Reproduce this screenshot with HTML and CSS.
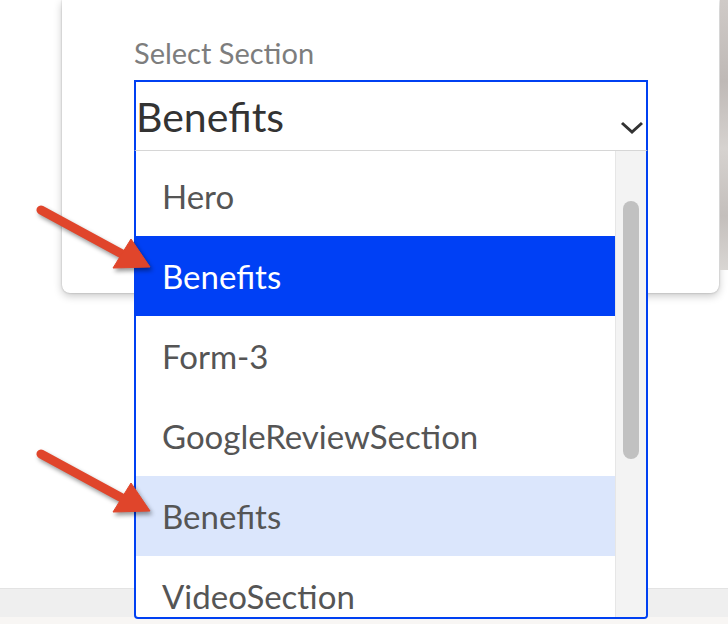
FILE: index.html
```html
<!DOCTYPE html>
<html lang="en">

<head>
    <meta charset="UTF-8">
    <meta name="viewport" content="width=device-width, initial-scale=1.0">
    <title>Select Section</title>
    <link rel="stylesheet" href="styles.css">
</head>

<body>
    <div class="stage">
        <div class="top-row">
            <div class="card">
                <label class="field-label" for="section">Select Section</label>
                <div class="select-wrap">
                    <div class="select-box" id="section">
                        <span class="select-value">Benefits</span>
                        <svg class="chevron" width="24" height="14" viewBox="0 0 24 14">
                            <polyline points="2,2 12,11 22,2" fill="none" stroke="#333" stroke-width="3" />
                        </svg>
                    </div>
                    <div class="dropdown">
                        <ul class="options">
                            <li>Hero</li>
                            <li class="active">Benefits</li>
                            <li>Form-3</li>
                            <li>GoogleReviewSection</li>
                            <li class="hover">Benefits</li>
                            <li>VideoSection</li>
                        </ul>
                        <div class="scrollbar">
                            <div class="thumb"></div>
                        </div>
                    </div>
                </div>
            </div>
            <div class="photo"></div>
        </div>

        <div class="footer-band"></div>
        <div class="footer-edge"></div>

        <svg class="arrows" width="728" height="624" viewBox="0 0 728 624">
            <g class="arrow">
                <line x1="41" y1="210" x2="122" y2="254" />
                <polygon points="150,267 131,239 113,268" />
            </g>
            <g class="arrow">
                <line x1="41" y1="454" x2="122" y2="498" />
                <polygon points="150,511 131,483 113,512" />
            </g>
        </svg>
    </div>
</body>

</html>
```

FILE: styles.css
```css
body {
    margin: 0;
    padding: 0;
    background-color: #fff;
    font-family: Lato, "Open Sans", sans-serif;
}

.stage {
    position: relative;
    width: 728px;
    height: 624px;
    overflow: hidden;
}

.top-row {
    display: flex;
    align-items: flex-start;
    height: 588px;
    padding-left: 62px;
    box-sizing: border-box;
}

.card {
    width: 657px;
    height: 293px;
    padding: 35px 0 0 72px;
    box-sizing: border-box;
    background-color: #fff;
    border-radius: 0 0 8px 8px;
    box-shadow: 0 3px 9px rgba(0, 0, 0, 0.22), 0 0 2px rgba(0, 0, 0, 0.25);
}

.photo {
    width: 8px;
    height: 270px;
    margin-left: 1px;
    background: linear-gradient(180deg, #cfcac7, #bfb9b6 30%, #d6d2cf 55%, #c4bfbc 80%, #d9d6d3);
}

.field-label {
    display: block;
    font-size: 29px;
    color: #7d7d7d;
    line-height: 36px;
    margin-bottom: 9px;
}

.select-wrap {
    position: relative;
    width: 514px;
}

.select-box {
    display: flex;
    justify-content: space-between;
    height: 71px;
    border: 2px solid #0040f2;
    border-bottom: 1px solid #d6d6d6;
    box-sizing: border-box;
    padding: 0 2px 0 0;
}

.select-value {
    font-size: 41px;
    color: #333;
    line-height: 74px;
    margin-top: -2px;
}

.chevron {
    align-self: flex-end;
    margin-bottom: 15px;
}

.dropdown {
    position: absolute;
    top: 100%;
    left: 0;
    width: 514px;
    height: 468px;
    display: flex;
    border: 2px solid #0040f2;
    border-top: none;
    border-radius: 0 0 4px 4px;
    box-sizing: border-box;
    background-color: #fff;
    overflow: hidden;
}

.options {
    flex: 1;
    list-style: none;
    margin: 0;
    padding: 5px 0 0;
}

.options li {
    height: 80px;
    line-height: 80px;
    padding-left: 26px;
    font-size: 33px;
    color: #555;
}

.options li.active {
    background-color: #0040f5;
    color: #fff;
}

.options li.hover {
    background-color: #dbe6fc;
}

.scrollbar {
    width: 31px;
    background-color: #f3f3f3;
    border-left: 1px solid #e6e6e6;
    box-sizing: border-box;
    padding: 50px 0 0 7px;
}

.thumb {
    width: 16px;
    height: 258px;
    border-radius: 8px;
    background-color: #c1c1c1;
}

.footer-band {
    height: 28px;
    background-color: #efefef;
    border-top: 1px solid #e3e3e3;
}

.footer-edge {
    height: 7px;
    background-color: #f8f6f4;
}

.arrows {
    position: absolute;
    top: 0;
    left: 0;
    pointer-events: none;
}

.arrow {
    fill: #e0452b;
    stroke: #e0452b;
    filter: drop-shadow(2px 3px 2px rgba(0, 0, 0, 0.4));
}

.arrow line {
    stroke-width: 9;
    stroke-linecap: round;
}

.arrow polygon {
    stroke-width: 1;
    stroke-linejoin: round;
}
```
